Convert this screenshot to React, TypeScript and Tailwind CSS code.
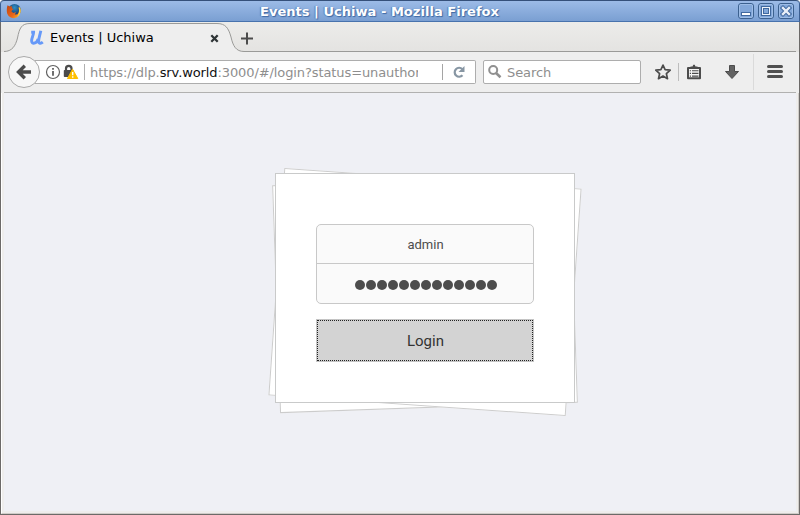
import React from "react";

function FirefoxLogo() {
  return (
    <svg className="h-4 w-4" viewBox="0 0 16 16">
      <defs>
        <linearGradient id="fox" x1="0" y1="0" x2="1" y2="1">
          <stop offset="0" stopColor="#c2440f" />
          <stop offset="0.6" stopColor="#e8661b" />
          <stop offset="1" stopColor="#fbc02d" />
        </linearGradient>
        <radialGradient id="globe" cx="0.5" cy="0.3" r="0.7">
          <stop offset="0" stopColor="#2f8fc4" />
          <stop offset="1" stopColor="#10285c" />
        </radialGradient>
      </defs>
      <circle cx="8.5" cy="7.2" r="6.3" fill="url(#globe)" />
      <path d="M1.6 2.2 3.6 3.6 6 3.2 5.8 5.2 7.6 6 6 7.2 5.4 8.6 7.4 10 10 9 8.8 11.4 11.4 11.2C13.4 9.5 13.4 6.5 12.2 4.2L14 5.6C15.6 10 12.6 15.2 8 15.2 3.4 15.2.8 11.6.8 8 .8 5.4 1 3.6 1.6 2.2Z" fill="url(#fox)" />
      <path d="M14 4.2C15.6 8 14.6 12 11 13.8 12.8 11.4 13.6 8 12.8 4.6Z" fill="#fcd34a" />
    </svg>
  );
}

function WindowButton({ kind }: { kind: "min" | "max" | "close" }) {
  return (
    <svg className="h-4 w-4" viewBox="0 0 16 16">
      <rect x="0.5" y="0.5" width="15" height="15" rx="2.5" fill="#82a7d9" stroke="#3c618f" />
      <rect x="1.5" y="1.5" width="13" height="13" rx="1.5" fill="none" stroke="#9dbce6" />
      {kind === "min" && <rect x="3.5" y="9.5" width="9" height="3" fill="#fff" stroke="#41699f" />}
      {kind === "max" && (
        <>
          <rect x="3.5" y="3.5" width="9" height="9" fill="#eef3fa" stroke="#41699f" />
          <rect x="5.5" y="5.5" width="5" height="5" fill="#82a7d9" stroke="#41699f" />
        </>
      )}
      {kind === "close" && (
        <>
          <path d="M5 5 11 11M11 5 5 11" stroke="#41699f" strokeWidth="4.4" strokeLinecap="square" />
          <path d="M5 5 11 11M11 5 5 11" stroke="#e9eff8" strokeWidth="2.4" strokeLinecap="square" />
        </>
      )}
    </svg>
  );
}

function TitleBar() {
  return (
    <header className="flex h-[22px] shrink-0 items-center rounded-t-[4px] border border-b-[#4873ad] border-l-[#3b5f92] border-r-[#3b5f92] border-t-[#35507a] bg-linear-to-b from-[#9cbbe7] to-[#7a9fd2] px-[5px]">
      <FirefoxLogo />
      <h1 className="flex-1 pt-px pr-px text-center font-['DejaVu_Sans',sans-serif] text-[13px] leading-5 font-bold tracking-[0.03px] whitespace-nowrap text-white [text-shadow:1px_1px_1px_#3f69a3,-1px_0_1px_#5a82ba]">
        Events | Uchiwa - Mozilla Firefox
      </h1>
      <div className="flex gap-1">
        <WindowButton kind="min" />
        <WindowButton kind="max" />
        <WindowButton kind="close" />
      </div>
    </header>
  );
}

function TabStrip() {
  return (
    <div className="relative h-[30px] shrink-0 bg-linear-to-b from-[#ececea] to-[#e4e3e1]">
      <svg className="absolute inset-0 h-[30px] w-[798px]" viewBox="1 22 798 30">
        <path d="M4 51.5C12 51.5 15.5 46 17.5 38 19.5 28 21.5 23.5 30 23.5H217C225.500 23.500 228.500 28 231 37 233 46 236 51.500 244 51.500V52H4Z" fill="#eeeeee" />
        <path d="M4 51.5C12 51.5 15.5 46 17.500 38 19.500 28 21.500 23.500 30 23.500H217C225.500 23.500 228.500 28 231 37 233 46 236 51.500 244 51.500H796" fill="none" stroke="#9a9a98" />
      </svg>
      <div className="relative flex h-full items-center pt-[2px] font-['DejaVu_Sans',sans-serif] text-[13px] text-black">
        <svg className="ml-[27px] h-4 w-4" viewBox="0 0 16 16">
          <path d="M3.200 2.200H5.600C5.600 5 3.600 8 3.600 10.800 3.600 14.600 8.500 14 10.200 9M12.800 0.800C12 5 10.600 8.500 10.600 11.200 10.600 13.600 12.800 13.800 14.800 12.200" fill="none" stroke="#6699f8" strokeWidth="2.900" />
        </svg>
        <span className="ml-[6px] w-[160px] leading-4">Events | Uchiwa</span>
        <svg className="h-[9px] w-[9px]" viewBox="0 0 9 9">
          <path d="M1.300 1.300 7.700 7.700M7.700 1.300 1.300 7.700" stroke="#2e3436" strokeWidth="2.300" />
        </svg>
        <svg className="ml-[22px] h-[13px] w-[13px]" viewBox="0 0 13 13">
          <path d="M6 0.500V12.500M0 6.500H12" stroke="#4c4c4c" strokeWidth="2" />
        </svg>
      </div>
    </div>
  );
}

function NavBar() {
  return (
    <div className="mx-[3px] flex h-[41px] shrink-0 items-center border-b border-[#b1b1b0] bg-[#eeeeee] font-['DejaVu_Sans',sans-serif] text-[13px] text-[#8e8e8e]">
      <svg className="z-10 ml-[4px] h-8 w-8 shrink-0" viewBox="0 0 32 32">
        <circle cx="16" cy="16" r="15.500" fill="#f7f7f7" stroke="#a9a9a9" />
        <path d="M16.800 9.700 10.500 16 16.800 22.300M11 16H23" fill="none" stroke="#4c4c4c" strokeWidth="3.400" />
      </svg>
      <div className="-ml-[5px] flex h-6 w-[441px] shrink-0 items-center rounded-r-[2px] border border-l-0 border-[#adadad] bg-white">
        <svg className="ml-[10px] h-4 w-4" viewBox="0 0 16 16">
          <circle cx="8" cy="8" r="6.500" fill="none" stroke="#606060" strokeWidth="1.200" />
          <path d="M8 7V11.800M8 4V5.800" stroke="#606060" strokeWidth="1.800" />
        </svg>
        <svg className="ml-[2px] h-4 w-4" viewBox="0 0 16 16">
          <path d="M3 7V4.500C3 1 8.500 1 8.500 4.500V7" fill="none" stroke="#4c4c4c" strokeWidth="2.200" />
          <rect x="0.800" y="6" width="9.700" height="7" rx="0.800" fill="#4c4c4c" />
          <path d="M9.500 5.200 14.800 14.500H4.500Z" fill="#ffbf00" stroke="#ffbf00" strokeWidth="1" strokeLinejoin="round" />
          <path d="M9.700 8V11.300M9.700 12.300V13.700" stroke="#fff" strokeWidth="1.400" />
        </svg>
        <span className="ml-[5px] h-4 w-px bg-[#b0b0b0]" />
        <span className="ml-[5px] w-[328px] overflow-hidden pt-px leading-5 tracking-[-0.1px] whitespace-nowrap">
          https://dlp.<span className="text-[#111]">srv.world</span>:3000/#/login?status=unauthorized
        </span>
        <span className="ml-[24px] h-4 w-px bg-[#a5a5a5]" />
        <svg className="ml-[8px] h-4 w-4" viewBox="0 0 16 16">
          <path d="M11.500 11.300A4.500 4.500 0 1 1 11.300 5" fill="none" stroke="#8796a3" strokeWidth="2.200" />
          <path d="M13.500 2V8H7.500Z" fill="#8796a3" />
        </svg>
      </div>
      <div className="ml-[7px] flex h-6 w-[158px] shrink-0 items-center rounded-[2px] border border-[#adadad] bg-white">
        <svg className="ml-[3px] h-4 w-4" viewBox="0 0 16 16">
          <circle cx="6.200" cy="6" r="4" fill="none" stroke="#909090" strokeWidth="2" />
          <path d="M9 9 13.500 13.300" stroke="#909090" strokeWidth="2.600" />
        </svg>
        <span className="ml-[4px] pt-px leading-5 tracking-[-0.1px]">Search</span>
      </div>
      <svg className="ml-[14px] h-4 w-4" viewBox="0 0 16 16">
        <path d="M8 1.100 10.100 5.700 15.200 6.200 11.400 9.700 12.500 14.700 8 12.100 3.500 14.700 4.600 9.700 0.800 6.200 5.900 5.700Z" fill="none" stroke="#4c4c4c" strokeWidth="1.700" strokeLinejoin="round" />
      </svg>
      <span className="ml-[7px] h-[18px] w-px bg-[#bdbdbd]" />
      <svg className="ml-[7px] h-4 w-4" viewBox="0 0 16 16">
        <path d="M2 4H14V14.200H2Z" fill="#f4f4f4" stroke="#4c4c4c" strokeWidth="2" strokeLinejoin="round" />
        <path d="M4.500 4.500V2.500H6.500L7.300 0.800H8.700L9.500 2.500H11.500V4.500Z" fill="#4c4c4c" />
        <path d="M3.800 6.700H5M6 6.700H12.500M3.800 9.400H5M6 9.400H12.500M3.800 12.100H5M6 12.100H12.500" stroke="#4c4c4c" strokeWidth="1.100" />
      </svg>
      <svg className="ml-[22px] h-4 w-4" viewBox="0 0 16 16">
        <path d="M5.500 1.500H10.500V7.500H14.500L8 14.500 1.500 7.500H5.500Z" fill="#636363" stroke="#4c4c4c" strokeLinejoin="round" />
      </svg>
      <span className="ml-[13px] h-9 w-px bg-[#dadada]" />
      <svg className="ml-[12px] h-4 w-[18px]" viewBox="0 0 18 16">
        <path d="M2.500 2.500H15.500M2.500 7.500H15.500M2.500 12.500H15.500" stroke="#505050" strokeWidth="3" strokeLinecap="round" />
      </svg>
    </div>
  );
}

const PASSWORD_LENGTH = 13;

function LoginCard() {
  return (
    <section className="relative isolate h-[230px] w-[300px]">
      <div className="absolute top-[7px] left-[1.400px] -z-10 h-[228px] w-[298px] -rotate-2 border border-[#cccccc] bg-white" />
      <div className="absolute top-[5px] left-px -z-10 h-[228px] w-[298px] rotate-[4deg] border border-[#cccccc] bg-white" />
      <form className="flex h-full flex-col border border-[#c9caca] bg-white px-10 pt-[50px] font-[Roboto,sans-serif]">
        <div className="h-20 rounded-[5px] border border-[#c8c8c8] bg-[#fafafa]">
          <div className="flex h-[39px] items-center justify-center border-b border-[#c8c8c8] pt-px pl-px text-[13px] text-[#4d4d4d]">
            admin
          </div>
          <div className="flex h-[39px] items-center justify-center gap-[0.500px] pt-[3px] pl-[1.500px]">
            {Array.from({ length: PASSWORD_LENGTH }, (_, i) => (
              <span key={i} className="h-[10.500px] w-[10.500px] rounded-full bg-[#4d4d4d]" />
            ))}
          </div>
        </div>
        <button type="button" className="mt-[15px] h-[43px] border border-[#c4c4c4] bg-[#d3d3d3] text-[15px] text-[#333]">
          <span className="flex h-full items-center justify-center border border-dotted border-[#222] pt-[2px] pl-px tracking-[0.050px]">Login</span>
        </button>
      </form>
    </section>
  );
}

export default function App() {
  return (
    <div className="h-[515px] w-[800px] overflow-hidden bg-white">
      <div className="flex h-full flex-col">
        <TitleBar />
        <div className="flex min-h-0 flex-1 flex-col border-x border-b border-[#6c6a68] bg-[#eeeeee]">
          <TabStrip />
          <NavBar />
          <div className="flex min-h-0 flex-1 border border-t-0 border-r-[#cfccc8] border-b-[#cfccc8] border-l-white bg-[#eeedec] px-[2px] pb-[2px]">
            <main className="flex flex-1 items-start bg-[#eff0f5] pt-20 pl-[271px]">
              <LoginCard />
            </main>
          </div>
        </div>
      </div>
    </div>
  );
}
